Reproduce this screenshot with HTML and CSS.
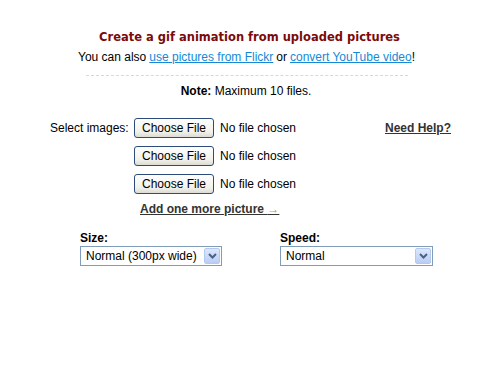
FILE: index.html
```html
<!DOCTYPE html>
<html>
<head>
  <meta charset="utf-8">
  <link rel="stylesheet" href="styles.css">
</head>
<body>
  <div class="container">
    <div class="header">
      <h1>Create a gif animation from uploaded pictures</h1>
      <p>You can also <a href="#">use pictures from Flickr</a> or <a href="#">convert YouTube video</a>!</p>
    </div>

    <div class="note"><strong>Note:</strong> Maximum 10 files.</div>

    <div class="upload">
      <div class="upload-row">
        <span class="upload-label">Select images:</span>
        <span class="file-input"><span class="file-btn">Choose File</span>No file chosen</span>
        <a href="#" class="help-link">Need Help?</a>
      </div>
      <div class="upload-row">
        <span class="upload-label"></span>
        <span class="file-input"><span class="file-btn">Choose File</span>No file chosen</span>
      </div>
      <div class="upload-row">
        <span class="upload-label"></span>
        <span class="file-input"><span class="file-btn">Choose File</span>No file chosen</span>
      </div>
      <a href="#" class="add-link">Add one more picture <span class="arrow">&rarr;</span></a>
    </div>

    <div class="options">
      <div class="option">
        <label>Size:</label>
        <div class="select size-select">
          <span class="select-value">Normal (300px wide)</span>
          <span class="select-btn">
            <svg width="9" height="6" viewBox="0 0 9 6"><path d="M1 1 L4.5 4.5 L8 1" fill="none" stroke="#4d6185" stroke-width="2"/></svg>
          </span>
        </div>
      </div>
      <div class="option">
        <label>Speed:</label>
        <div class="select speed-select">
          <span class="select-value">Normal</span>
          <span class="select-btn">
            <svg width="9" height="6" viewBox="0 0 9 6"><path d="M1 1 L4.5 4.5 L8 1" fill="none" stroke="#4d6185" stroke-width="2"/></svg>
          </span>
        </div>
      </div>
    </div>
  </div>
</body>
</html>
```

FILE: styles.css
```css
* {
  margin: 0;
  padding: 0;
  box-sizing: border-box;
}

body {
  width: 489px;
  height: 385px;
  background: #fff;
  font-family: 'Liberation Sans', Arial, sans-serif;
  font-size: 12px;
  color: #000;
}

.container {
  padding-top: 29px;
}

.header {
  text-align: center;
  padding-left: 4px;
}

.header h1 {
  font-family: 'DejaVu Sans', Verdana, sans-serif;
  font-size: 11.5px;
  font-weight: bold;
  color: #7b0a0a;
  line-height: 16px;
  padding-left: 6px;
}

.header p {
  margin-top: 4px;
  line-height: 16px;
  padding-bottom: 10px;
  width: 322px;
  margin-left: auto;
  margin-right: auto;
  white-space: nowrap;
  display: flex;
  justify-content: center;
  border-bottom: 1px dashed #d8d8d8;
}

.header a {
  color: #1589d6;
}

.header p a:first-child {
  margin: 0 3px;
}

.header p a:last-child {
  margin: 0 0 0 3px;
}

.note {
  text-align: center;
  margin-top: 7px;
  line-height: 16px;
  padding-left: 3px;
}

.upload {
  margin-top: 19px;
  padding-left: 50px;
  width: 451px;
}

.upload-row {
  display: flex;
  align-items: center;
  height: 20px;
  margin-bottom: 8px;
}

.upload-label {
  width: 84px;
  flex-shrink: 0;
}

.file-input {
  display: flex;
  align-items: center;
  white-space: nowrap;
}

.file-btn {
  display: inline-block;
  width: 80px;
  height: 20px;
  line-height: 18px;
  text-align: center;
  border: 1px solid #2d4c7a;
  border-radius: 3px;
  background: linear-gradient(#fefefe, #f2f2ec 70%, #dcdcd4);
  margin-right: 6px;
  font-size: 12px;
}

.help-link {
  margin-left: auto;
  font-weight: bold;
  color: #333;
}

.add-link {
  display: inline-block;
  margin-left: 90px;
  margin-top: -1px;
  font-weight: bold;
  color: #333;
}

.add-link .arrow {
  color: #999;
  font-weight: normal;
}

.options {
  display: flex;
  margin-top: 16px;
  padding-left: 80px;
}

.option {
  display: flex;
  flex-direction: column;
}

.option + .option {
  margin-left: 58px;
}

.option label {
  font-weight: bold;
  line-height: 13px;
  margin-bottom: 1px;
}

.select {
  display: flex;
  align-items: center;
  height: 20px;
  border: 1px solid #7f9db9;
  background: #fff;
  padding: 1px;
}

.size-select {
  width: 142px;
}

.speed-select {
  width: 153px;
}

.select-value {
  flex: 1;
  padding-left: 4px;
  white-space: nowrap;
}

.select-btn {
  width: 16px;
  height: 16px;
  display: flex;
  align-items: center;
  justify-content: center;
  background: linear-gradient(#dce7fc, #b9cdf5);
  border: 1px solid #b4c8f0;
  border-radius: 2px;
}
```
